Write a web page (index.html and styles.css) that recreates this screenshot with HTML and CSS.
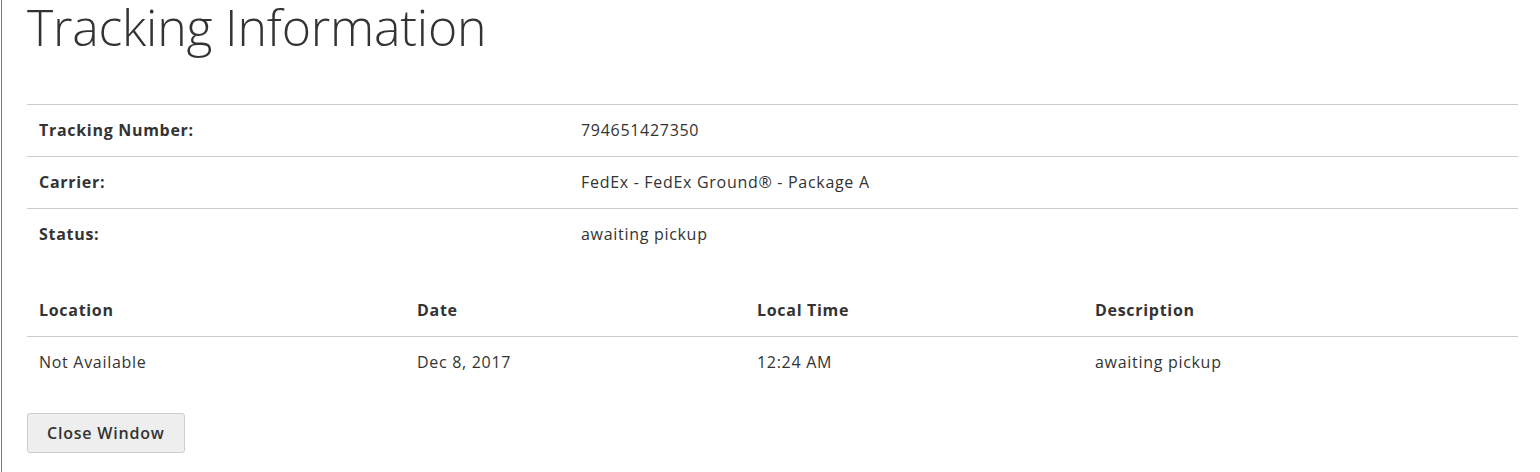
FILE: index.html
```html
<!DOCTYPE html>
<html lang="en">
<head>
<meta charset="utf-8">
<title>Tracking Information</title>
<link rel="stylesheet" href="styles.css">
</head>
<body>
<div class="page">
  <h1 class="page-title">Tracking Information</h1>
  <table class="info-table">
    <tbody>
      <tr><th class="label-col">Tracking Number:</th><td>794651427350</td></tr>
      <tr><th class="label-col">Carrier:</th><td>FedEx - FedEx Ground® - Package A</td></tr>
      <tr><th class="label-col">Status:</th><td>awaiting pickup</td></tr>
    </tbody>
  </table>
  <table class="progress-table">
    <thead>
      <tr>
        <th class="col-location">Location</th>
        <th class="col-date">Date</th>
        <th class="col-time">Local Time</th>
        <th class="col-desc">Description</th>
      </tr>
    </thead>
    <tbody>
      <tr>
        <td>Not Available</td>
        <td>Dec 8, 2017</td>
        <td>12:24 AM</td>
        <td>awaiting pickup</td>
      </tr>
    </tbody>
  </table>
  <button type="button" class="close-btn">Close Window</button>
</div>
</body>
</html>
```
FILE: styles.css
```css
html, body {
  margin: 0;
  padding: 0;
  background: #fff;
}
body {
  font-family: "Open Sans", "Liberation Sans", sans-serif;
  font-size: 16px;
  color: #333;
}
.page {
  margin-left: 1px;
  border-left: 1px solid #4a86c5;
  padding: 0 22px 20px 25px;
  min-height: 452px;
}
.page-title {
  margin: 0 0 50px;
  font-size: 50px;
  font-weight: 300;
  line-height: 54px;
  letter-spacing: -0.2px;
  color: #333;
  white-space: nowrap;
}
table {
  width: 100%;
  border-collapse: collapse;
  table-layout: fixed;
}
th, td {
  text-align: left;
  vertical-align: top;
  padding: 10px 12px;
  line-height: 31px;
  font-size: 16px;
  letter-spacing: 0.7px;
}
th {
  font-weight: 700;
}
td {
  font-weight: 400;
}
.info-table {
  margin-bottom: 25px;
}
.info-table tr {
  border-top: 1px solid #ccc;
}
.label-col {
  width: 518px;
}
.progress-table thead tr {
  border-bottom: 1px solid #ccc;
}
.col-location { width: 354px; }
.col-date { width: 316px; }
.col-time { width: 314px; }
.close-btn {
  display: block;
  box-sizing: border-box;
  height: 40px;
  margin-top: 25px;
  font-family: "Open Sans", "Liberation Sans", sans-serif;
  font-size: 16px;
  font-weight: 600;
  line-height: 24px;
  letter-spacing: 0.8px;
  color: #333;
  background: #eee;
  border: 1px solid #cdcdcd;
  border-radius: 3px;
  padding: 7px 19px;
  cursor: pointer;
}
```
